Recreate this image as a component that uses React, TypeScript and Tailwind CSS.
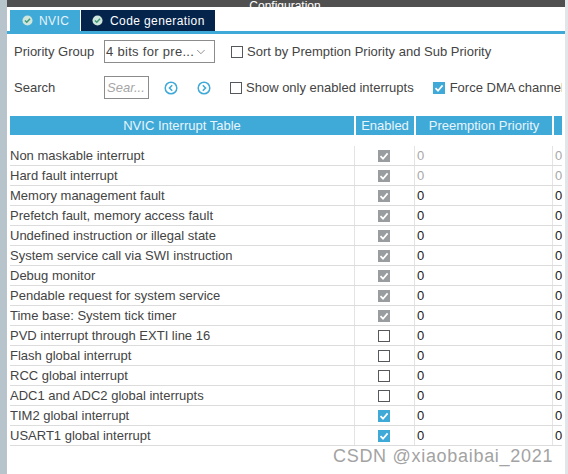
import { ChevronDown } from "lucide-react";

const rows = [
  { name: "Non maskable interrupt", state: "locked", dim: true },
  { name: "Hard fault interrupt", state: "locked", dim: true },
  { name: "Memory management fault", state: "locked" },
  { name: "Prefetch fault, memory access fault", state: "locked" },
  { name: "Undefined instruction or illegal state", state: "locked" },
  { name: "System service call via SWI instruction", state: "locked" },
  { name: "Debug monitor", state: "locked" },
  { name: "Pendable request for system service", state: "locked" },
  { name: "Time base: System tick timer", state: "locked" },
  { name: "PVD interrupt through EXTI line 16", state: "off" },
  { name: "Flash global interrupt", state: "off" },
  { name: "RCC global interrupt", state: "off" },
  { name: "ADC1 and ADC2 global interrupts", state: "off" },
  { name: "TIM2 global interrupt", state: "on" },
  { name: "USART1 global interrupt", state: "on" },
];

function Tick() {
  return (
    <svg viewBox="0 0 12 12" className="h-3 w-3">
      <path d="M2.5 6.2 5 8.7 9.6 3.4" fill="none" stroke="#fff" strokeWidth="1.7" />
    </svg>
  );
}

function Check({ state }: { state: string }) {
  if (state === "off") {
    return <span className="h-3 w-3 shrink-0 border border-[#55585c] bg-white" />;
  }

  return (
    <span
      className={
        state === "on"
          ? "flex h-3 w-3 shrink-0 items-center justify-center bg-[#3fa9d8]"
          : "flex h-3 w-3 shrink-0 items-center justify-center bg-[#9a9d9f]"
      }
    >
      <Tick />
    </span>
  );
}

function CircleBadge() {
  return (
    <svg viewBox="0 0 12 12" className="h-[11px] w-[11px] shrink-0">
      <circle cx="6" cy="6" r="5.5" fill="#cfe6dc" />
      <path d="M3.2 6.1 5.2 8 8.8 4.2" fill="none" stroke="#3d9a78" strokeWidth="1.6" />
    </svg>
  );
}

function NavArrow({ flip }: { flip?: boolean }) {
  return (
    <svg viewBox="0 0 14 14" className="h-[14px] w-[14px]">
      <circle cx="7" cy="7" r="5.8" fill="none" stroke="#3fa9d8" strokeWidth="1.5" />
      <path
        d={flip ? "M5.8 4.3 8.5 7 5.8 9.7" : "M8.2 4.3 5.5 7 8.2 9.7"}
        fill="none"
        stroke="#3fa9d8"
        strokeWidth="1.6"
      />
    </svg>
  );
}

export default function App() {
  return (
    <div className="relative flex h-[474px] w-[568px] overflow-hidden bg-white font-['Liberation_Sans',sans-serif] text-[13px] text-[#444]">
      <div className="w-[7px] shrink-0 bg-[#b8c4cc]" />

      <div className="flex w-[558px] shrink-0 flex-col">
        <div className="flex h-[7px] items-end justify-center overflow-hidden bg-[#505050] pr-[2px] text-[12px] leading-[12px] text-white">
          <span className="relative top-[5px]">Configuration</span>
        </div>

        <div className="mt-[3px] flex h-[21px] pl-[3px] text-[12px] tracking-[0.4px]">
          <div className="flex w-[70px] items-center gap-[6px] bg-[#3fa9d8] pl-[12px] text-[#e6f4fa]">
            <CircleBadge />
            NVIC
          </div>
          <div className="ml-[1px] flex w-[134px] items-center gap-[7px] bg-[#04244c] pl-[11px] text-white">
            <CircleBadge />
            Code generation
          </div>
        </div>
        <div className="h-[3px] bg-[#3fa9d8]" />

        <div className="mt-[6px] flex h-[23px] items-center pl-[7px]">
          <span className="w-[90px] shrink-0">Priority Group</span>
          <div className="flex h-[23px] w-[111px] shrink-0 items-center justify-between whitespace-nowrap border border-[#8c8c8c] pl-[1px] pr-[6px] tracking-[0.3px]">
            4 bits for pre...
            <ChevronDown size={14} strokeWidth={1.25} color="#666" />
          </div>
          <span className="ml-[16px] h-[12px] w-[12px] shrink-0 border border-[#55585c]" />
          <span className="ml-[4px] whitespace-nowrap">Sort by Premption Priority and Sub Priority</span>
        </div>

        <div className="mt-[13px] flex h-[23px] w-[555px] items-center overflow-hidden pl-[7px]">
          <span className="w-[90px] shrink-0">Search</span>
          <div className="flex h-[23px] w-[45px] shrink-0 items-center border border-[#8c8c8c] pl-[2px] italic text-[#a6a6a6]">
            Sear...
          </div>
          <span className="ml-[15px] flex shrink-0">
            <NavArrow />
          </span>
          <span className="ml-[19px] flex shrink-0">
            <NavArrow flip />
          </span>
          <span className="ml-[19px] h-[12px] w-[12px] shrink-0 border border-[#55585c]" />
          <span className="ml-[4px] shrink-0 whitespace-nowrap">Show only enabled interrupts</span>
          <span className="ml-[19px] flex shrink-0">
            <Check state="on" />
          </span>
          <span className="ml-[5px] shrink-0 whitespace-nowrap">Force DMA channel</span>
        </div>

        <div className="mt-[17px] flex h-[19px] gap-[2px] pl-[3px] text-[#e8f5fb]">
          <div className="flex w-[344px] items-center justify-center bg-[#3fa9d8]">NVIC Interrupt Table</div>
          <div className="flex w-[58px] items-center justify-center bg-[#3fa9d8]">Enabled</div>
          <div className="flex w-[136px] items-center justify-center bg-[#3fa9d8]">Preemption Priority</div>
          <div className="w-[8px] bg-[#3fa9d8]" />
        </div>

        <div className="mt-[11px] w-[555px] pl-[3px]">
          {rows.map((row) => (
            <div className="flex h-[20px] border-b border-[#dcdcdc]" key={row.name}>
              <div className="flex w-[344px] shrink-0 items-center truncate">{row.name}</div>
              <div className="flex w-[60px] shrink-0 items-center justify-center border-l border-[#e4e4e4] pr-[2px]">
                <Check state={row.state} />
              </div>
              <div
                className={
                  row.dim
                    ? "flex w-[138px] shrink-0 items-center border-l border-[#e4e4e4] pl-[2px] text-[#a8a8a8]"
                    : "flex w-[138px] shrink-0 items-center border-l border-[#e4e4e4] pl-[2px] text-[#222]"
                }
              >
                0
              </div>
              <div
                className={
                  row.dim
                    ? "flex flex-1 items-center border-l border-[#e4e4e4] pl-[2px] text-[#a8a8a8]"
                    : "flex flex-1 items-center border-l border-[#e4e4e4] pl-[2px] text-[#222]"
                }
              >
                0
              </div>
            </div>
          ))}
        </div>
      </div>

      <div className="flex-1 bg-[#e3e6e8]" />

      <span className="absolute left-[333px] top-[446px] text-[18px] leading-[21px] tracking-[0.7px] text-[#a3a3a3]">
        CSDN @xiaobaibai_2021
      </span>
    </div>
  );
}
